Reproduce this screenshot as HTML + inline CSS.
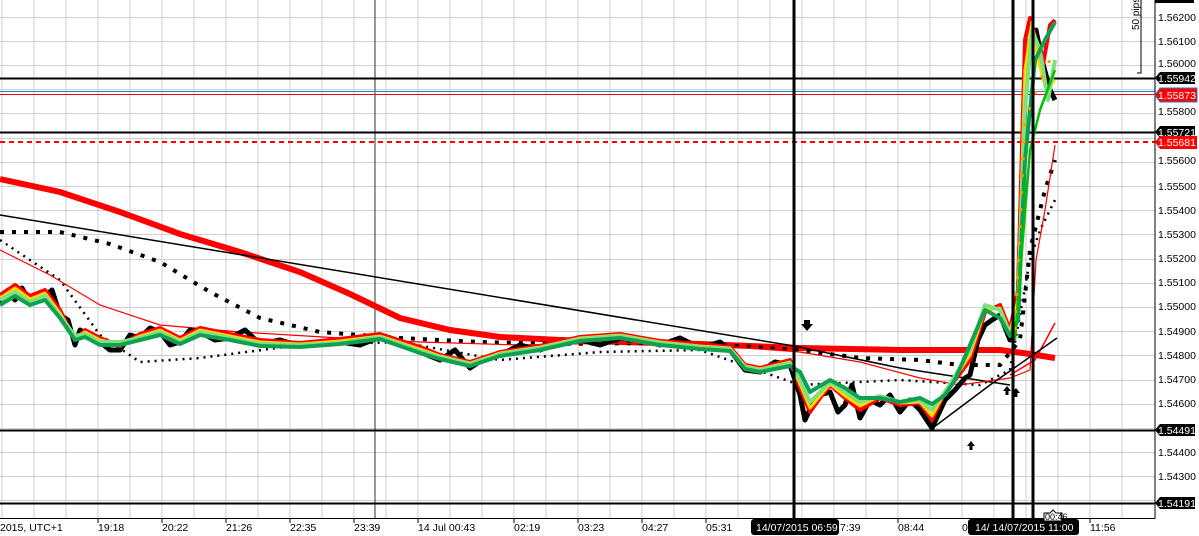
<!DOCTYPE html>
<html><head><meta charset="utf-8"><style>
html,body{margin:0;padding:0;background:#fff;overflow:hidden}
svg{display:block;font-family:"Liberation Sans",Arial,sans-serif}
</style></head><body>
<svg width="1199" height="536" viewBox="0 0 1199 536" xmlns="http://www.w3.org/2000/svg">
<rect width="1199" height="536" fill="#fff"/>
<g stroke="#cfcfcf" stroke-width="1">
<path d="M2 0V518M34 0V518M66 0V518M98 0V518M130 0V518M162 0V518M194 0V518M226 0V518M258 0V518M290 0V518M322 0V518M354 0V518M386 0V518M418 0V518M450 0V518M482 0V518M514 0V518M546 0V518M578 0V518M610 0V518M642 0V518M674 0V518M706 0V518M738 0V518M770 0V518M802 0V518M834 0V518M866 0V518M898 0V518M930 0V518M962 0V518M994 0V518M1026 0V518M1058 0V518M1090 0V518M1122 0V518"/>
<path d="M0 17.5H1155M0 41.5H1155M0 65.5H1155M0 89.5H1155M0 113.5H1155M0 138.5H1155M0 162.5H1155M0 186.5H1155M0 210.5H1155M0 234.5H1155M0 259.5H1155M0 283.5H1155M0 307.5H1155M0 331.5H1155M0 355.5H1155M0 380.5H1155M0 404.5H1155M0 428.5H1155M0 452.5H1155M0 476.5H1155M0 500.5H1155"/>
</g>
<line x1="375" y1="0" x2="375" y2="518" stroke="#333" stroke-width="1"/>
<line x1="0" y1="78.5" x2="1155" y2="78.5" stroke="#000" stroke-width="2"/>
<line x1="0" y1="91.5" x2="1155" y2="91.5" stroke="#1a7fd0" stroke-width="1"/>
<line x1="0" y1="94.5" x2="1155" y2="94.5" stroke="#f00" stroke-width="1"/>
<line x1="0" y1="132.5" x2="1155" y2="132.5" stroke="#000" stroke-width="2"/>
<line x1="0" y1="142" x2="1155" y2="142" stroke="#f00" stroke-width="2" stroke-dasharray="5,4"/>
<line x1="0" y1="430.5" x2="1155" y2="430.5" stroke="#000" stroke-width="2"/>
<line x1="0" y1="503.5" x2="1155" y2="503.5" stroke="#000" stroke-width="2"/>
<polyline fill="none" stroke="#f00" stroke-width="6" points="0,179 60,192 120,212 180,234 240,252 300,272 350,294 400,318 450,330 500,337 560,340 620,342 700,344 800,348 900,350 1000,350 1030,354 1055,358"/>
<polyline fill="none" stroke="#000" stroke-width="1.5" points="0,215 794,346 900,368 1010,385"/>
<polyline fill="none" stroke="#000" stroke-width="4" stroke-dasharray="4,8" points="0,232 60,232 110,244 160,262 210,292 260,318 320,332 400,338 480,342 560,344 650,343 740,346 800,350 860,358 920,360 960,365 1000,365 1020,340 1030,250 1045,190 1055,160"/>
<polyline fill="none" stroke="#000" stroke-width="2.5" stroke-dasharray="2,5" points="0,240 60,280 100,335 140,362 200,358 300,345 400,342 500,360 600,352 700,350 800,385 900,380 980,385 1010,370 1030,260 1040,230 1055,200"/>
<polyline fill="none" stroke="#f00" stroke-width="1.2" points="0,250 50,275 100,305 160,325 240,332 340,338 420,342 520,345 620,343 720,346 800,352 860,362 920,378 960,385 1010,378 1030,370 1036,260 1045,210 1055,145"/>
<polyline fill="none" stroke="#f00" stroke-width="1.5" points="1010,375 1035,360 1055,323"/>
<polyline fill="none" stroke="#000" stroke-width="1.5" points="930,430 990,385 1057,338"/>
<g fill="none" stroke-linejoin="round">
<polyline stroke="#000" stroke-width="5" points="0,303 8,290 15,300 22,288 30,302 38,295 45,296 52,290 60,315 68,320 75,345 80,330 85,333 100,342 110,350 120,350 130,335 140,338 150,328 160,332 170,345 180,342 190,330 200,332 215,340 230,338 245,330 260,344 280,340 300,346 320,342 340,342 360,345 380,337 400,345 420,352 440,360 455,350 470,368 485,358 500,355 520,345 540,350 560,342 580,340 600,345 620,338 640,340 660,345 680,338 700,348 720,342 730,350 745,370 760,372 775,362 790,365 800,395 805,420 812,405 820,395 830,392 838,412 845,405 852,385 860,418 870,400 880,405 890,395 900,412 910,400 920,410 932,428 945,400 955,390 965,378 970,375 978,340 985,325 992,320 1000,315 1010,340 1018,310 1025,100 1030,40 1036,30 1042,60 1050,90 1055,100"/>
<polyline stroke="#f00" stroke-width="4" points="0,295 15,285 30,296 45,290 60,310 75,340 85,330 100,338 120,346 140,334 160,328 180,338 200,328 230,334 260,340 300,343 340,339 380,334 420,347 440,355 470,362 500,352 540,346 580,337 620,334 660,341 700,344 730,347 745,365 760,368 790,360 800,388 810,412 820,398 830,385 845,398 860,410 880,398 900,405 920,403 932,420 945,392 955,380 970,360 985,312 1000,305 1010,330 1018,290 1025,40 1030,18 1036,40 1042,70 1050,25 1055,20"/>
<polyline stroke="#ffd800" stroke-width="3" points="0,298 15,288 30,299 45,293 60,313 75,338 85,332 100,340 120,344 140,336 160,330 180,340 200,330 230,336 260,342 300,344 340,341 380,336 420,349 440,356 470,363 500,353 540,347 580,338 620,335 660,342 700,346 730,348 745,366 760,369 790,362 800,384 810,408 820,396 830,384 845,396 860,406 880,396 900,403 920,402 932,416 945,392 955,378 970,355 985,310 1000,308 1010,332 1018,300 1025,70 1032,22 1038,60 1046,90 1055,80"/>
<polyline stroke="#7fe07f" stroke-width="4" points="0,300 15,292 30,302 45,296 60,316 75,336 85,334 100,342 120,342 140,338 160,332 180,342 200,332 230,338 260,344 300,345 340,343 380,337 420,351 440,357 470,364 500,354 540,348 580,339 620,336 660,343 700,347 730,349 745,367 760,370 790,363 800,380 810,402 820,392 830,382 845,392 860,402 880,396 900,402 920,400 932,410 945,392 955,376 970,350 985,305 1000,310 1010,334 1018,310 1025,110 1032,30 1040,50 1048,100 1055,60"/>
<polyline stroke="#10a050" stroke-width="4" points="0,305 15,296 30,305 45,300 60,318 75,340 85,337 100,345 120,345 140,340 160,335 180,344 200,335 230,340 260,346 300,347 340,344 380,339 420,353 440,359 470,366 500,356 540,350 580,341 620,338 660,345 700,349 730,351 745,369 760,372 790,366 800,372 810,392 820,386 830,380 845,388 860,398 880,398 900,402 920,398 932,404 945,395 955,380 970,345 985,310 1000,318 1010,336 1018,320 1025,160 1035,60 1045,40 1055,22"/>
<polyline stroke="#00c000" stroke-width="2.5" points="1015,340 1022,250 1030,150 1040,110 1055,70"/>
<polyline stroke="#ff9900" stroke-width="3" stroke-dasharray="3,14" points="1015,330 1025,120 1040,80 1055,50"/>
</g>
<path d="M804 320h6v4h3l-6 7-6-7h3z" fill="#000"/>
<path d="M967 446l4-5 4 5h-2.5v4h-3v-4z" fill="#000"/>
<path d="M1003 391l4-5 4 5h-2.5v4h-3v-4zM1012 393l4-5 4 5h-2.5v4h-3v-4z" fill="#000"/>
<line x1="794" y1="0" x2="794" y2="520" stroke="#000" stroke-width="3"/>
<line x1="1013" y1="0" x2="1013" y2="520" stroke="#000" stroke-width="3"/>
<line x1="1033" y1="0" x2="1033" y2="520" stroke="#000" stroke-width="3"/>
<path d="M1141 0V73H1137" fill="none" stroke="#000" stroke-width="1"/>
<text transform="translate(1139,30) rotate(-90)" font-size="10" fill="#000">50 pips</text>
<rect x="1155" y="0" width="44" height="536" fill="#fff"/>
<rect x="0" y="519" width="1199" height="17" fill="#fff"/>
<line x1="1155" y1="0" x2="1155" y2="519" stroke="#000" stroke-width="1"/>
<line x1="0" y1="518.5" x2="1155" y2="518.5" stroke="#000" stroke-width="1"/>
<g font-size="10.5" fill="#000">
<text x="1158" y="21">1.56200</text><text x="1158" y="45">1.56100</text><text x="1158" y="67">1.56000</text>
<text x="1158" y="115">1.55800</text><text x="1158" y="164">1.55600</text><text x="1158" y="190">1.55500</text>
<text x="1158" y="214">1.55400</text><text x="1158" y="238">1.55300</text><text x="1158" y="262">1.55200</text>
<text x="1158" y="286">1.55100</text><text x="1158" y="310">1.55000</text><text x="1158" y="335">1.54900</text>
<text x="1158" y="359">1.54800</text><text x="1158" y="383">1.54700</text><text x="1158" y="407">1.54600</text>
<text x="1158" y="456">1.54400</text><text x="1158" y="480">1.54300</text>
</g>
<g font-size="10.5">
<path d="M1155 78l5-6h35v12h-35z" fill="#000"/><text x="1158" y="82" fill="#fff">1.55942</text>
<path d="M1155 95l5-7h37v14h-37z" fill="#f00" stroke="#1a7fd0" stroke-width="1"/><text x="1158" y="99" fill="#fff">1.55873</text>
<path d="M1155 132l5-6h35v12h-35z" fill="#000"/><text x="1158" y="136" fill="#fff">1.55721</text>
<path d="M1155 142l5-6h37v13h-37z" fill="#f00"/><text x="1158" y="146" fill="#fff">1.55681</text>
<path d="M1155 430l5-6h35v12h-35z" fill="#000"/><text x="1158" y="434" fill="#fff">1.54491</text>
<path d="M1155 503l5-6h35v12h-35z" fill="#000"/><text x="1158" y="507" fill="#fff">1.54191</text>
<path d="M1155 0h39v3h-39z" fill="#000"/>
</g>
<g font-size="10.5" fill="#000">
<text x="0" y="531">2015, UTC+1</text><text x="98" y="531">19:18</text><text x="162" y="531">20:22</text>
<text x="226" y="531">21:26</text><text x="290" y="531">22:35</text><text x="354" y="531">23:39</text>
<text x="418" y="531">14 Jul 00:43</text><text x="514" y="531">02:19</text><text x="578" y="531">03:23</text>
<text x="642" y="531">04:27</text><text x="706" y="531">05:31</text><text x="840" y="531">7:39</text>
<text x="898" y="531">08:44</text><text x="962" y="531">0</text><text x="1090" y="531">11:56</text>
</g>
<g stroke="#000"><path d="M98 519v4M162 519v4M226 519v4M290 519v4M354 519v4M418 519v4M514 519v4M578 519v4M642 519v4M706 519v4M898 519v4M1090 519v4"/></g>
<rect x="751" y="519" width="88" height="16" rx="3" fill="#000"/>
<text x="756" y="531" font-size="10.5" fill="#fff">14/07/2015 06:59</text>
<rect x="968" y="519" width="111" height="16" rx="3" fill="#000"/>
<text x="975" y="531" font-size="10.5" fill="#fff">14/   14/07/2015 11:00</text>
<path d="M1044 513h6l3-3 3 3h6v8h-18z" fill="#fff" stroke="#000" stroke-width="1"/>
<text x="1045" y="520" font-size="9" fill="#000">00:46</text>
</svg>
</body></html>
